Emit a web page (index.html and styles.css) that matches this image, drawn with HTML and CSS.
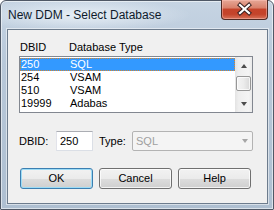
FILE: index.html
```html
<!DOCTYPE html>
<html>
<head>
<meta charset="utf-8">
<link rel="stylesheet" href="styles.css">
</head>
<body>
<div class="window">
  <div class="titlebar">
    <span class="title">New DDM - Select Database</span>
    <div class="close">
      <svg width="45" height="19" viewBox="0 0 45 19">
        <path d="M18 5 L27 13 M27 5 L18 13" stroke="#3a2222" stroke-width="4.2" stroke-linecap="square" fill="none"/>
        <path d="M18 5 L27 13 M27 5 L18 13" stroke="#ffffff" stroke-width="2.2" stroke-linecap="square" fill="none"/>
      </svg>
    </div>
  </div>
  <div class="client">
    <div class="list-header"><span class="col1">DBID</span><span>Database Type</span></div>
    <div class="listbox">
      <div class="rows">
        <div class="row selected"><span class="col1">250</span><span>SQL</span></div>
        <div class="row"><span class="col1">254</span><span>VSAM</span></div>
        <div class="row"><span class="col1">510</span><span>VSAM</span></div>
        <div class="row"><span class="col1">19999</span><span>Adabas</span></div>
      </div>
      <div class="scrollbar">
        <div class="sb-btn"><span class="arrow-up"></span></div>
        <div class="sb-track"><div class="sb-thumb"></div></div>
        <div class="sb-btn"><span class="arrow-down"></span></div>
      </div>
    </div>
    <div class="fields">
      <span class="lbl-dbid">DBID:</span>
      <div class="edit">250</div>
      <span class="lbl-type">Type:</span>
      <div class="combo"><span>SQL</span><span class="arrow-down gray"></span></div>
    </div>
    <div class="buttons">
      <div class="btn default">OK</div>
      <div class="btn">Cancel</div>
      <div class="btn">Help</div>
    </div>
  </div>
</div>
</body>
</html>
```
FILE: styles.css
```css
html, body {
  margin: 0;
  padding: 0;
  background: #ffffff;
}
body {
  font-family: "Liberation Sans", Arial, sans-serif;
  font-size: 11px;
  color: #000;
}
.window {
  width: 274px;
  height: 210px;
  box-sizing: border-box;
  border: 1px solid #4f5866;
  border-radius: 6px 6px 1px 1px;
  background: linear-gradient(to bottom, #c6d4e3 0%, #b8c8d9 30%, #aebfd1 100%);
  box-shadow: inset 0 0 0 1px rgba(255,255,255,0.55);
  display: flex;
  flex-direction: column;
}
.titlebar {
  height: 28px;
  display: flex;
  justify-content: space-between;
  align-items: flex-start;
  background: radial-gradient(ellipse 110px 16px at 80px 14px, rgba(235,242,248,0.9), rgba(235,242,248,0));
}
.title {
  padding: 7px 0 0 7px;
  font-size: 12px;
  line-height: 15px;
  color: #0e1a2c;
}
.close {
  width: 45px;
  height: 19px;
  margin: -1px 5px 0 0;
  border: 1px solid #4e2a24;
  border-top: none;
  border-radius: 0 0 4px 4px;
  background: linear-gradient(to bottom, #e6a796 0%, #d9826d 40%, #c5432a 50%, #c4442b 75%, #d7735a 100%);
  box-shadow: inset 0 0 0 1px rgba(255,200,190,0.45);
  overflow: hidden;
}
.close svg { display: block; }
.client {
  margin: 0 5px 0 6px;
  height: 175px;
  box-sizing: border-box;
  border: 1px solid #6d7c8d;
  box-shadow: 0 0 0 1px rgba(255,255,255,0.5);
  background: #f0f0f0;
  padding: 11px 14px 0 11px;
}
.list-header {
  display: flex;
  line-height: 13px;
  padding-left: 1px;
  margin-bottom: 2px;
}
.list-header .col1 { width: 49px; }
.listbox {
  height: 57px;
  box-sizing: border-box;
  border: 1px solid #828790;
  background: #fff;
  display: flex;
}
.rows {
  flex: 1;
  padding-top: 1px;
}
.row {
  display: flex;
  height: 13px;
  line-height: 13px;
  padding-left: 1px;
  box-sizing: border-box;
}
.row .col1 { width: 49px; }
.row.selected {
  background: #3399ff;
  color: #fff;
  outline: 1px dotted #d9852a;
  outline-offset: -1px;
}
.scrollbar {
  width: 17px;
  display: flex;
  flex-direction: column;
  background: linear-gradient(to right, #e3e3e3 0%, #eeeeee 20%, #f4f4f4 80%, #eaeaea 100%);
}
.sb-btn {
  height: 17px;
  display: flex;
  align-items: center;
  justify-content: center;
}
.sb-track {
  flex: 1;
  padding: 2px 1px 0 1px;
}
.sb-thumb {
  height: 15px;
  box-sizing: border-box;
  border: 1px solid #979797;
  border-radius: 2px;
  background: linear-gradient(to right, #f4f4f4 0%, #ececec 50%, #d8d8d8 100%);
  box-shadow: inset 0 0 0 1px rgba(255,255,255,0.7);
}
.arrow-up {
  width: 0;
  height: 0;
  border-left: 3.5px solid transparent;
  border-right: 3.5px solid transparent;
  border-bottom: 4px solid #4d4d4d;
}
.arrow-down {
  width: 0;
  height: 0;
  border-left: 3.5px solid transparent;
  border-right: 3.5px solid transparent;
  border-top: 4px solid #4d4d4d;
}
.arrow-down.gray { border-top-color: #a6a6a6; }
.fields {
  margin-top: 18px;
  display: flex;
  align-items: center;
  height: 20px;
}
.lbl-dbid { width: 37px; }
.edit {
  width: 37px;
  height: 20px;
  box-sizing: border-box;
  border: 1px solid #dbdfe6;
  border-top-color: #abadb3;
  border-left-color: #e2e3ea;
  background: #fff;
  line-height: 18px;
  padding-left: 3px;
}
.lbl-type {
  margin-left: 6px;
  width: 33px;
}
.combo {
  width: 121px;
  height: 20px;
  box-sizing: border-box;
  border: 1px solid #b3b3b3;
  border-radius: 2px;
  background: #f4f4f4;
  color: #a0a0a0;
  display: flex;
  align-items: center;
  justify-content: space-between;
  padding: 0 4px 0 3px;
}
.buttons {
  margin-top: 17px;
  margin-left: 1px;
  display: flex;
  gap: 6px;
}
.btn {
  width: 73px;
  height: 21px;
  box-sizing: border-box;
  border: 1px solid #707070;
  border-radius: 3px;
  background: linear-gradient(to bottom, #f2f2f2 0%, #ebebeb 50%, #dddddd 50%, #cfcfcf 100%);
  box-shadow: inset 0 0 0 1px rgba(255,255,255,0.75);
  text-align: center;
  line-height: 19px;
}
.btn.default {
  border-color: #3c7fb1;
  box-shadow: inset 0 0 0 1px #9ddcf6;
}
```
